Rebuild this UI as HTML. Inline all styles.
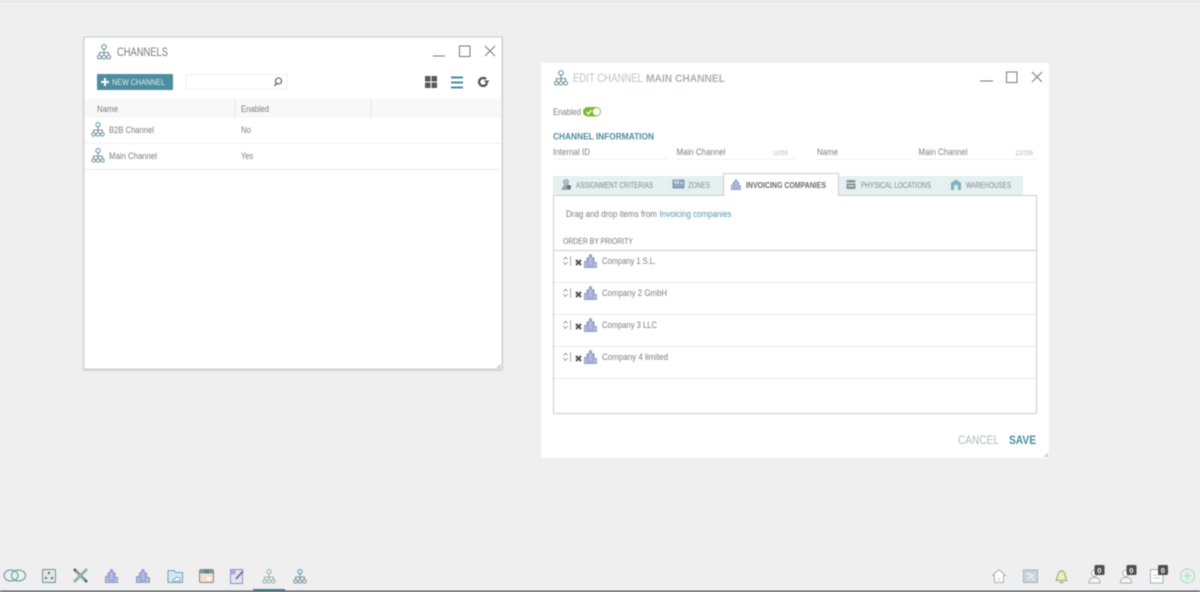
<!DOCTYPE html>
<html><head><meta charset="utf-8"><style>
html,body{margin:0;padding:0;background:#efefef;width:1200px;height:592px;overflow:hidden}
svg{display:block;filter:blur(.45px)}
text{font-family:"Liberation Sans",sans-serif;fill:#7d7d7d;font-size:9px}
.b{font-weight:bold}
</style></head><body>
<svg width="1200" height="592" viewBox="0 0 1200 592" xmlns="http://www.w3.org/2000/svg">
<defs>
<filter id="sh" x="-5%" y="-5%" width="110%" height="110%"><feDropShadow dx="0" dy="1" stdDeviation="1" flood-color="#000" flood-opacity=".16"/></filter>
<symbol id="org" viewBox="0 0 15 17"><g fill="none" stroke="#6b8f9c" stroke-width="1.100"><circle cx="7.500" cy="3" r="2.400" stroke="#5b93a8"/><path d="M7.500 5.500V9M2.500 12V9.200H12.500V12M7.500 9V12" stroke="#7a8a90"/><circle cx="2.500" cy="14" r="2"/><circle cx="7.500" cy="14" r="2"/><circle cx="12.500" cy="14" r="2"/></g></symbol>
<symbol id="bld" viewBox="0 0 14 15"><path d="M0 15V8H3V4H5.500V1.500L7 0 8.500 1.500V4H11V9H14V15Z" fill="#a3aad6" stroke="#7a84b5" stroke-width=".6"/><path d="M1.500 10h1.500M1.500 12.500h1.500M6 5.500h2M6 8h2M6 10.500h2M11 11h1.500M11 13h1.500" stroke="#e4e6f4" stroke-width="1"/></symbol>
<symbol id="usr" viewBox="0 0 14 16"><circle cx="7" cy="4.500" r="3.400" fill="#fff" stroke="#9aa" stroke-width=".9"/><path d="M1 15c0-4 2.500-6 6-6s6 2 6 6z" fill="#fbf3e4" stroke="#9aa" stroke-width=".9"/></symbol>
</defs>
<rect x="0" y="0" width="1200" height="592" fill="#efefef"/>
<rect x="0" y="1" width="1200" height="1" fill="#e2e2e2"/>

<!-- Channels window -->
<rect x="84" y="37" width="418" height="332" fill="#fff" stroke="#cfcfcf" filter="url(#sh)"/>
<use href="#org" x="97" y="44" width="14" height="16"/>
<text x="117" y="56" textLength="51" lengthAdjust="spacingAndGlyphs" style="font-size:11.500px;fill:#747a7e">CHANNELS</text>
<path d="M433 56H445M459.500 46H470V56.500H459.500ZM485 46L495 56M495 46L485 56" fill="none" stroke="#777" stroke-width="1"/>
<rect x="97" y="74" width="76" height="16" rx="1" fill="#4c8d9f"/>
<path d="M105 78V86M101 82H109" stroke="#fff" stroke-width="2"/>
<text x="112" y="85" textLength="53" lengthAdjust="spacingAndGlyphs" style="font-size:8.500px;fill:#dcecf0">NEW CHANNEL</text>
<rect x="186" y="74.500" width="101" height="15" fill="#fff" stroke="#f0f0f0"/>
<circle cx="278.500" cy="81" r="3" fill="none" stroke="#555" stroke-width="1.100"/><path d="M276.500 83.500L274.500 86" stroke="#555" stroke-width="1.200"/>
<path d="M425 76h5.500v5.500H425zM431.500 76h5.500v5.500h-5.500zM425 82.500h5.500v5.500H425zM431.500 82.500h5.500v5.500h-5.500z" fill="#5a5a5a"/>
<path d="M451 77.500H463M451 82.500H463M451 87.500H463" stroke="#4c8d9f" stroke-width="2"/>
<path d="M486 79.200A4 4 0 1 0 486.800 83.500" fill="none" stroke="#555" stroke-width="2.300"/><path d="M484 80.500h5.500l-2.700 3.500z" fill="#555"/>
<rect x="85" y="99" width="416" height="19" fill="#f8f8f8"/>
<path d="M235 99V118M371 99V118" stroke="#e4e4e4"/>
<text x="97" y="112" textLength="21" lengthAdjust="spacingAndGlyphs">Name</text>
<text x="241" y="112" textLength="28" lengthAdjust="spacingAndGlyphs">Enabled</text>
<use href="#org" x="91" y="122" width="14" height="15"/>
<text x="109" y="133" textLength="45" lengthAdjust="spacingAndGlyphs">B2B Channel</text>
<text x="241" y="133" textLength="10" lengthAdjust="spacingAndGlyphs">No</text>
<path d="M85 143.500H501M85 169.500H501" stroke="#eeeeee"/>
<use href="#org" x="91" y="148" width="14" height="15"/>
<text x="109" y="159" textLength="48" lengthAdjust="spacingAndGlyphs">Main Channel</text>
<text x="241" y="159" textLength="12" lengthAdjust="spacingAndGlyphs">Yes</text>
<path d="M497 368L500.500 364.500M499 368L500.500 366.500" stroke="#aaa" stroke-width=".8"/>

<!-- Edit window -->
<rect x="541" y="63" width="508" height="395" fill="#fff"/>
<use href="#org" x="554" y="70" width="14" height="16"/>
<text x="573" y="82" textLength="70" lengthAdjust="spacingAndGlyphs" style="font-size:11.500px;fill:#bcc3c7">EDIT CHANNEL</text>
<text class="b" x="646" y="82" textLength="79" lengthAdjust="spacingAndGlyphs" style="font-size:11px;fill:#a8b0b5">MAIN CHANNEL</text>
<path d="M980 81H993M1006.500 72H1017V82.500H1006.500ZM1032 72L1042 82M1042 72L1032 82" fill="none" stroke="#777" stroke-width="1"/>
<text x="553" y="115" textLength="28" lengthAdjust="spacingAndGlyphs">Enabled</text>
<rect x="583" y="107" width="18" height="9.500" rx="4.700" fill="#7db82e"/>
<circle cx="596.500" cy="111.700" r="3.700" fill="#fff"/>
<path d="M586.500 112L588.500 114 591.500 110" fill="none" stroke="#fff" stroke-width="1.300"/>
<text class="b" x="553" y="139.500" textLength="101" lengthAdjust="spacingAndGlyphs" style="font-size:9px;fill:#4c8d9f">CHANNEL INFORMATION</text>
<text x="553" y="155" textLength="37" lengthAdjust="spacingAndGlyphs">Internal ID</text>
<text x="676.500" y="155" textLength="49" lengthAdjust="spacingAndGlyphs">Main Channel</text>
<text x="773" y="155" textLength="15" lengthAdjust="spacingAndGlyphs" style="font-size:6px;fill:#b0b0b0">12/255</text>
<text x="817" y="155" textLength="21" lengthAdjust="spacingAndGlyphs">Name</text>
<text x="918.500" y="155" textLength="49" lengthAdjust="spacingAndGlyphs">Main Channel</text>
<text x="1015" y="155" textLength="18" lengthAdjust="spacingAndGlyphs" style="font-size:6px;fill:#b0b0b0">12/255</text>
<path d="M553 159.500H667M676 159.500H795M817 159.500H910M916 159.500H1036" stroke="#f0f0f0"/>

<!-- Tabs -->
<rect x="553" y="176" width="470" height="20" fill="#e5f0f1"/>
<path d="M666 176V195M942 176V195" stroke="#eef5f5"/>
<rect x="553.500" y="195.500" width="483" height="218" fill="#fff" stroke="#cdcdcd"/>
<path d="M723.500 196V173.500H838.500V196" fill="#fff" stroke="#cdcdcd"/>
<rect x="724" y="194" width="114" height="3" fill="#fff"/>
<g>
<circle cx="566" cy="182" r="2.500" fill="#b4c3c7" stroke="#778"  stroke-width=".6"/><path d="M561 190l3-5h4l3 5z" fill="#8ea8b0"/><circle cx="569" cy="187" r="2" fill="#667"/>
<text x="576" y="188" textLength="77" lengthAdjust="spacingAndGlyphs" style="font-size:8px;fill:#7a868a">ASSIGNMENT CRITERIAS</text>
<path d="M673 180h11v8h-11z" fill="#8fa9c4" stroke="#667f90" stroke-width=".7"/><path d="M675 180v3h3v-3M680 183h3" stroke="#fff" stroke-width=".8" fill="none"/>
<text x="688" y="188" textLength="22" lengthAdjust="spacingAndGlyphs" style="font-size:8px;fill:#7a868a">ZONES</text>
<use href="#bld" x="731" y="179" width="10" height="11"/>
<text class="b" x="746" y="188" textLength="80" lengthAdjust="spacingAndGlyphs" style="font-size:8px;fill:#636b6f">INVOICING COMPANIES</text>
<rect x="846.500" y="180" width="9" height="9" rx="1" fill="#8a9499"/><path d="M846 183H856M848 186h6" stroke="#e5f0f1" stroke-width="1"/>
<text x="861" y="188" textLength="70" lengthAdjust="spacingAndGlyphs" style="font-size:8px;fill:#7a868a">PHYSICAL LOCATIONS</text>
<path d="M951 183L956 179.500 961 183V190H951Z" fill="#7fb0be"/><rect x="954" y="185" width="4" height="5" fill="#dcecef"/>
<text x="966" y="188" textLength="45" lengthAdjust="spacingAndGlyphs" style="font-size:8px;fill:#7a868a">WAREHOUSES</text>
</g>

<text x="566" y="217" textLength="91" lengthAdjust="spacingAndGlyphs">Drag and drop items from</text>
<text x="659.500" y="217" textLength="72" lengthAdjust="spacingAndGlyphs" style="fill:#4a9aa8">Invoicing companies</text>
<text x="563" y="244" textLength="70" lengthAdjust="spacingAndGlyphs" style="font-size:8.500px;fill:#757575">ORDER BY PRIORITY</text>
<path d="M554 250.500H1036" stroke="#cdcdcd"/>
<path d="M554 282.500H1036M554 314.500H1036M554 346.500H1036M554 378.500H1036" stroke="#e8e8e8"/>

<defs><g id="ctl">
<path d="M563.500 259.500L565.500 257 567.500 259.500M563.500 262L565.500 264.500 567.500 262" fill="none" stroke="#888" stroke-width=".8"/>
<path d="M570.500 256V266" stroke="#a5a5a5" stroke-width=".9"/>
<path d="M576 260L581 265M581 260L576 265" stroke="#4f4f4f" stroke-width="2"/>
<use href="#bld" x="584" y="254" width="13" height="14"/>
</g></defs>
<use href="#ctl"/>
<use href="#ctl" y="32"/>
<use href="#ctl" y="64"/>
<use href="#ctl" y="96"/>
<text x="602" y="264" textLength="54" lengthAdjust="spacingAndGlyphs">Company 1 S.L.</text>
<text x="602" y="296" textLength="65" lengthAdjust="spacingAndGlyphs">Company 2 GmbH</text>
<text x="602" y="328" textLength="55" lengthAdjust="spacingAndGlyphs">Company 3 LLC</text>
<text x="602" y="360" textLength="66" lengthAdjust="spacingAndGlyphs">Company 4 limited</text>
<text x="958" y="444" textLength="41" lengthAdjust="spacingAndGlyphs" style="font-size:11.500px;fill:#b3b8bb">CANCEL</text>
<text class="b" x="1009" y="444" textLength="27" lengthAdjust="spacingAndGlyphs" style="font-size:11.500px;fill:#4c8d9f">SAVE</text>
<path d="M1044.500 457L1048 453.500M1046.500 457L1048 455.500" stroke="#aaa" stroke-width=".8"/>

<!-- Taskbar -->
<rect x="0" y="590.500" width="1200" height="1.500" fill="#5a5f63"/>
<rect x="253" y="589" width="32" height="1.500" fill="#4c7f95"/>
<g fill="none" stroke="#6fa8a8" stroke-width="1.300"><ellipse cx="11" cy="575.500" rx="7" ry="5.500"/><ellipse cx="18.500" cy="575.500" rx="7" ry="5.500"/></g>
<rect x="42.500" y="569.500" width="13" height="13" rx="1" fill="#e0e8eb" stroke="#7b8c94"/><circle cx="49" cy="573" r="1" fill="#444"/><circle cx="46" cy="578" r="1" fill="#444"/><circle cx="52" cy="578" r="1" fill="#444"/>
<path d="M74 569L87 582" stroke="#7f9ca4" stroke-width="2.800"/><path d="M87 569L74 582" stroke="#94b0b6" stroke-width="2.800"/><path d="M74 569l2 2M85 580l2 2" stroke="#556" stroke-width="2"/>
<use href="#bld" x="105" y="569" width="13" height="14"/>
<use href="#bld" x="136" y="569" width="14" height="14"/>
<path d="M168 570.500H174L175.500 572.500H182.500V582.500H168Z" fill="#d4e8ef" stroke="#6ba3b5"/><path d="M173 581c0-2.500 2-2 3-3.500 1.500-1 4 .5 4 2v1.500z" fill="#fff" stroke="#7a9aa5" stroke-width=".8"/>
<rect x="199.500" y="569.500" width="14" height="13" rx="1.500" fill="#f5dccf" stroke="#888"/><rect x="199.500" y="569.500" width="14" height="4" fill="#8a9599"/><rect x="204" y="569.500" width="5" height="4" fill="#4c8d9f"/><rect x="207" y="577" width="4" height="3" fill="#fff"/>
<rect x="230.500" y="569.500" width="12" height="14" fill="#e4e2f6" stroke="#8a8fc0"/><rect x="230.500" y="569.500" width="5" height="5" fill="#a9a6dd"/><path d="M236 579L243 571" stroke="#778" stroke-width="1.800"/>
<g opacity=".65"><use href="#org" x="262" y="569" width="14" height="15"/></g>
<use href="#org" x="293" y="569" width="14" height="15"/>

<path d="M999 569.500L992.500 575.500H994.500V582.500H1003.500V575.500H1005.500Z" fill="#fff" stroke="#a9b0b3"/><rect x="997.500" y="577.500" width="3" height="5" fill="#e4e7e8"/>
<rect x="1023.500" y="570" width="14" height="12.500" fill="#c8d6d9" stroke="#a6b2b6"/><path d="M1026 574h4l1 2 3-1M1027 579l4-2 3 3" stroke="#eef3f4" stroke-width="1.200" fill="none"/>
<path d="M1056 580.500C1058 578 1057 572 1061.500 570.500 1066 572 1065 578 1067 580.500Z" fill="#f1ecb0" stroke="#86a88a"/><path d="M1059.500 582.500h4" stroke="#7da37f" stroke-width="1.200"/>
<use href="#usr" x="1088" y="569" width="13" height="15"/>
<rect x="1094.500" y="565" width="10" height="10" rx="1.500" fill="#4f4f4f"/><text x="1097.300" y="573" class="b" style="font-size:7.500px;fill:#fff">0</text>
<use href="#usr" x="1119" y="569" width="14" height="15"/>
<rect x="1126.500" y="565" width="10" height="10" rx="1.500" fill="#4f4f4f"/><text x="1129.300" y="573" class="b" style="font-size:7.500px;fill:#fff">0</text>
<path d="M1150.500 569.500H1163V583H1150.500Z" fill="#fff" stroke="#a9b0b3"/><path d="M1153 575H1160M1153 578H1160" stroke="#ccc"/>
<rect x="1158" y="565" width="10" height="10" rx="1.500" fill="#4f4f4f"/><text x="1160.800" y="573" class="b" style="font-size:7.500px;fill:#fff">0</text>
<circle cx="1187.500" cy="576" r="7" fill="#e5f3ea" stroke="#a9d9bd"/><path d="M1187.500 572V580M1183.500 576H1191.500" stroke="#a9d9bd" stroke-width="1.100"/>
</svg>
</body></html>
